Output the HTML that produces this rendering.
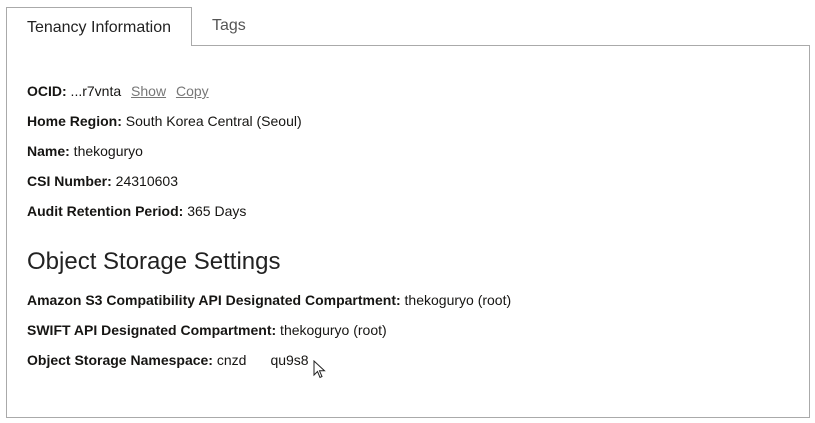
<!DOCTYPE html>
<html><head><style>
body{margin:0;background:#fff;width:815px;height:423px;overflow:hidden;font-family:"Liberation Sans",sans-serif;color:#161513;position:relative}
.tab{position:absolute;top:7px;left:6px;width:184px;height:38px;border:1px solid #aaa;border-bottom:none;background:#fff;z-index:2;font-size:16px;text-align:center;line-height:40px;color:#222}
.tab2{position:absolute;top:7px;left:212px;font-size:16px;line-height:38px;color:#555}
.panel{position:absolute;top:45px;left:6px;width:802px;height:371px;border:1px solid #aaa;background:#fff}
.r{position:absolute;left:27px;font-size:14px;white-space:nowrap}
.r b{font-weight:bold}
a{color:#777;text-decoration:underline;margin-left:6px}
h2{position:absolute;left:27px;top:248px;margin:0;font-weight:normal;font-size:24px;color:#222}
</style></head><body>
<div class="panel"></div>
<div class="tab">Tenancy Information</div>
<div class="tab2">Tags</div>
<div class="r" style="top:83px"><b>OCID:</b> ...r7vnta <a>Show</a> <a>Copy</a></div>
<div class="r" style="top:113px"><b>Home Region:</b> South Korea Central (Seoul)</div>
<div class="r" style="top:143px"><b>Name:</b> thekoguryo</div>
<div class="r" style="top:173px"><b>CSI Number:</b> 24310603</div>
<div class="r" style="top:203px"><b>Audit Retention Period:</b> 365 Days</div>
<h2>Object Storage Settings</h2>
<div class="r" style="top:292px"><b>Amazon S3 Compatibility API Designated Compartment:</b> thekoguryo (root)</div>
<div class="r" style="top:322px"><b>SWIFT API Designated Compartment:</b> thekoguryo (root)</div>
<div class="r" style="top:352px"><b>Object Storage Namespace:</b> cnzd<span style="display:inline-block;width:24px"></span>qu9s8</div>
<svg style="position:absolute;left:313px;top:360px" width="14" height="20" viewBox="0 0 14 20"><path d="M1 1 L1 15 L4.5 11.5 L7 17.5 L9 16.5 L6.5 10.8 L11.5 10.8 Z" fill="#fff" stroke="#222" stroke-width="1"/></svg>
</body></html>
